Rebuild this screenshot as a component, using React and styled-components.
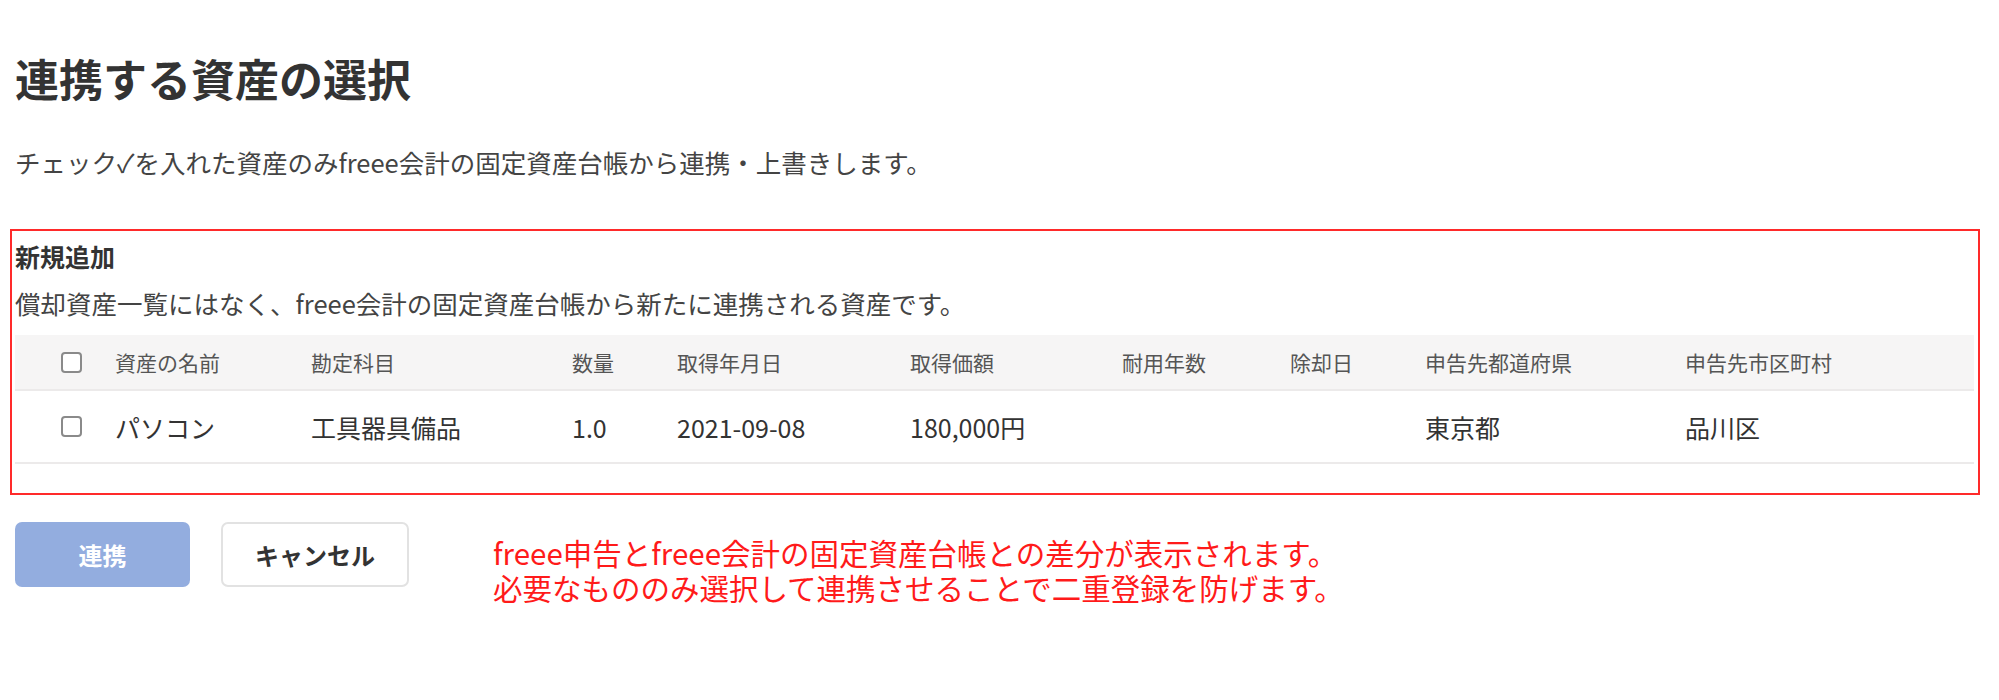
import React, { useState } from "react";
import styled, { createGlobalStyle } from "styled-components";

const GlobalStyle = createGlobalStyle`
  body {
    margin: 0;
    background: #fff;
    font-family: "Noto Sans CJK JP", "Noto Sans", sans-serif;
    color: #333;
  }
`;

const Page = styled.div`
  padding: 48px 25px 40px 15px;
`;

const Title = styled.h1`
  margin: 0;
  font-size: 44px;
  line-height: 60px;
  font-weight: 700;
  color: #333;
`;

const Lead = styled.p`
  margin: 36px 0 0;
  font-size: 25.5px;
  line-height: 36px;
  color: #444;
`;

const Section = styled.section`
  margin: 49px -6px 0 -5px;
  padding: 7px 4px 29px 3px;
  border: 2px solid #ff2a2a;
`;

const SectionTitle = styled.h2`
  margin: 0;
  font-size: 25px;
  line-height: 36px;
  font-weight: 700;
  color: #333;
`;

const SectionNote = styled.p`
  margin: 11px 0 0;
  font-size: 25.5px;
  line-height: 36px;
  color: #444;
`;

const Table = styled.div`
  margin-top: 14px;
`;

const Row = styled.div`
  display: grid;
  grid-template-columns: 100px 196px 261px 105px 233px 212px 168px 135px 260px 1fr;
  align-items: center;
  height: ${(p) => (p.$head ? "54px" : "71px")};
  background: ${(p) => (p.$head ? "#f6f5f5" : "#fff")};
  border-bottom: 2px solid #eceaea;
  font-size: ${(p) => (p.$head ? "21px" : "25px")};
  color: ${(p) => (p.$head ? "#555" : "#333")};
`;

const CheckCell = styled.div`
  padding-left: 46px;
  display: flex;
  align-items: center;
`;

const Check = styled.button`
  width: 21px;
  height: 21px;
  padding: 0;
  border: 2px solid #8a8a8a;
  border-radius: 4px;
  background: ${(p) => (p.$on ? "#2864f0" : "#fff")};
  cursor: pointer;
`;

const Cell = styled.div`
  white-space: nowrap;
`;

const Footer = styled.div`
  display: flex;
  align-items: flex-start;
  margin-top: 27px;
`;

const Button = styled.button`
  height: 65px;
  padding: 0;
  width: ${(p) => (p.$primary ? "175px" : "188px")};
  margin-left: ${(p) => (p.$primary ? "0" : "31px")};
  border-radius: 7px;
  border: ${(p) => (p.$primary ? "none" : "2px solid #e2e2e2")};
  background: ${(p) => (p.$primary ? "#93addf" : "#fff")};
  color: ${(p) => (p.$primary ? "#fff" : "#333")};
  font-family: inherit;
  font-size: 24px;
  font-weight: 700;
  cursor: pointer;
`;

const Annotation = styled.div`
  margin: 13px 0 0 84px;
  font-size: 29.5px;
  line-height: 35px;
  color: #ff1a1a;
`;

const Line = styled.div`
  white-space: nowrap;
`;

const columns = [
  "資産の名前",
  "勘定科目",
  "数量",
  "取得年月日",
  "取得価額",
  "耐用年数",
  "除却日",
  "申告先都道府県",
  "申告先市区町村",
];

const assets = [
  ["パソコン", "工具器具備品", "1.0", "2021-09-08", "180,000円", "", "", "東京都", "品川区"],
];

export default function App() {
  const [checked, setChecked] = useState({});
  const toggle = (k) => setChecked((c) => ({ ...c, [k]: !c[k] }));

  return (
    <Page>
      <GlobalStyle />
      <Title>連携する資産の選択</Title>
      <Lead>チェック✓を入れた資産のみfreee会計の固定資産台帳から連携・上書きします。</Lead>

      <Section>
        <SectionTitle>新規追加</SectionTitle>
        <SectionNote>償却資産一覧にはなく、freee会計の固定資産台帳から新たに連携される資産です。</SectionNote>
        <Table>
          <Row $head>
            <CheckCell>
              <Check $on={checked.all} onClick={() => toggle("all")} />
            </CheckCell>
            {columns.map((c) => (
              <Cell key={c}>{c}</Cell>
            ))}
          </Row>
          {assets.map((a, i) => (
            <Row key={i}>
              <CheckCell>
                <Check $on={checked[i]} onClick={() => toggle(i)} />
              </CheckCell>
              {a.map((v, j) => (
                <Cell key={j}>{v}</Cell>
              ))}
            </Row>
          ))}
        </Table>
      </Section>

      <Footer>
        <Button $primary>連携</Button>
        <Button>キャンセル</Button>
        <Annotation>
          <Line>freee申告とfreee会計の固定資産台帳との差分が表示されます。</Line>
          <Line>必要なもののみ選択して連携させることで二重登録を防げます。</Line>
        </Annotation>
      </Footer>
    </Page>
  );
}
